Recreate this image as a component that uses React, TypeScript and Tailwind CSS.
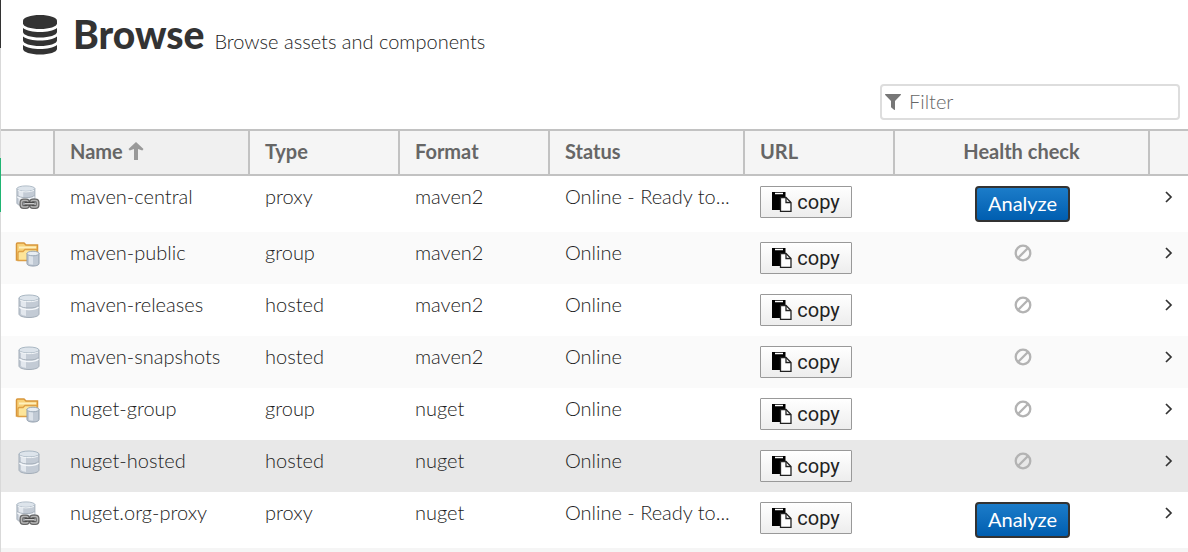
import React from 'react';

type RepoType = 'proxy' | 'group' | 'hosted';

interface Repository {
  name: string;
  type: RepoType;
  format: string;
  status: string;
}

const REPOSITORIES: Repository[] = [
  { name: 'maven-central', type: 'proxy', format: 'maven2', status: 'Online - Ready to...' },
  { name: 'maven-public', type: 'group', format: 'maven2', status: 'Online' },
  { name: 'maven-releases', type: 'hosted', format: 'maven2', status: 'Online' },
  { name: 'maven-snapshots', type: 'hosted', format: 'maven2', status: 'Online' },
  { name: 'nuget-group', type: 'group', format: 'nuget', status: 'Online' },
  { name: 'nuget-hosted', type: 'hosted', format: 'nuget', status: 'Online' },
  { name: 'nuget.org-proxy', type: 'proxy', format: 'nuget', status: 'Online - Ready to...' }
];

const SELECTED = 'nuget-hosted';

const DatabaseIcon = () => (
  <svg viewBox="0 0 34 40" className="h-10 w-[34px] shrink-0" fill="#333" aria-hidden="true">
    <path d="M0 5.5C0 2.5 7.6 0 17 0s17 2.5 17 5.5v3C34 11.500 26.400 14 17 14S0 11.500 0 8.500z" />
    <path d="M0 13c3.500 2.600 10 4 17 4s13.500-1.400 17-4v4c0 3-7.600 5.500-17 5.500S0 20 0 17z" />
    <path d="M0 21.500c3.500 2.600 10 4 17 4s13.500-1.400 17-4v4c0 3-7.600 5.500-17 5.500S0 28.500 0 25.500z" />
    <path d="M0 30c3.500 2.600 10 4 17 4s13.500-1.400 17-4v4c0 3-7.600 5.500-17 5.500S0 37 0 34z" />
  </svg>
);

const FilterIcon = () => (
  <svg viewBox="0 0 16 16" className="h-4 w-4 shrink-0" fill="#777" aria-hidden="true">
    <path d="M.6 0h14.800c.6 0 .8.700.4 1.100L10 7v8.400c0 .5-.6.700-1 .4l-2.700-2.300c-.2-.2-.3-.4-.3-.6V7L.2 1.100C-.2.700 0 0 .6 0z" />
  </svg>
);

const SortIcon = () => (
  <svg viewBox="0 0 16 18" className="h-[18px] w-4" fill="#999" aria-hidden="true">
    <path d="M8 0l7.500 7-1.200 1.500-4.300-1.500V18H6V7L1.700 8.500.5 7z" />
  </svg>
);

const Cylinder = () => (
  <>
    <path d="M1 4v16c0 2 4.500 3.500 10 3.500S21 22 21 20V4z" fill="#c3cbd5" stroke="#a3adb8" />
    <path d="M3 6v14c1 1 3 1.600 5 1.900V7.500z" fill="#e3e8ee" />
    <path d="M1.500 11.500c2 2 5 2.500 9.500 2.500s7.500-.5 9.500-2.500" fill="none" stroke="#a3adb8" />
    <path d="M1.500 13c2 2 5 2.500 9.500 2.500s7.500-.5 9.500-2.500" fill="none" stroke="#f4f7fa" strokeWidth="1.500" />
    <ellipse cx="11" cy="4" rx="10" ry="3" fill="#dde4eb" stroke="#a9b7c3" />
    <path d="M2 6c4 2.200 14 2.200 18 0" fill="none" stroke="#f5f8fa" />
  </>
);

const TypeIcon: React.FC<{ type: RepoType }> = ({ type }) => (
  <svg viewBox="0 0 26 26" className="h-[26px] w-[26px]" role="img" aria-label={type}>
    {type === 'hosted' && <g transform="translate(4 1)"><Cylinder /></g>}
    {type === 'proxy' && (
      <>
        <g transform="translate(2 0) scale(.9)"><Cylinder /></g>
        <g fill="none">
          <rect x="7.500" y="15.500" width="6.500" height="6.500" rx="2" stroke="#666" strokeWidth="4" />
          <rect x="17" y="15.500" width="6.500" height="6.500" rx="2" stroke="#666" strokeWidth="4" />
          <rect x="7.500" y="15.500" width="6.500" height="6.500" rx="2" stroke="#b5b5b5" strokeWidth="1.500" />
          <rect x="17" y="15.500" width="6.500" height="6.500" rx="2" stroke="#b5b5b5" strokeWidth="1.500" />
          <path d="M10.500 18.700h10" stroke="#444" strokeWidth="4" />
          <path d="M10.500 18.700h10" stroke="#ccc" strokeWidth="1.500" />
        </g>
      </>
    )}
    {type === 'group' && (
      <>
        <path d="M2.500 19V3c0-.7.3-1 1-1H10l2 2h11.500v15H3z" fill="#f8d27a" stroke="#d8963b" strokeWidth="1.500" />
        <path d="M5 6.500h17" stroke="#fff0bd" strokeWidth="2" />
        <path d="M4 19.500V12c0-1 .5-1.500 1.500-1.500H9l2-2h12v11z" fill="#fde59a" stroke="#dfa044" strokeWidth="1.300" />
        <path d="M13 12v10.500c0 1.600 2.700 2.500 6 2.500s6-.9 6-2.500V12z" fill="#c0c9d4" stroke="#8f9cab" />
        <path d="M15 14v8.500c1 .8 2.500 1 4 1V14z" fill="#dde3ea" />
        <ellipse cx="19" cy="12.500" rx="6" ry="2.300" fill="#e8edf2" stroke="#9aa8b6" />
      </>
    )}
  </svg>
);

const CopyIcon = () => (
  <svg viewBox="0 0 20 20" className="h-5 w-5" aria-hidden="true">
    <path d="M0 0h13.500v5H8v13H0z" fill="#000" />
    <path d="M3 1.500h8" stroke="#fff" strokeWidth="1.500" />
    <path d="M8.500 5.500H14l5 5v9H8.500z" fill="#fff" stroke="#222" strokeWidth="1.300" />
    <path d="M14 5.500v5h5" fill="none" stroke="#222" strokeWidth="1.300" />
  </svg>
);

const BanIcon = () => (
  <svg viewBox="0 0 18 18" className="h-[18px] w-[18px]" fill="none" stroke="#b3b3b3" strokeWidth="2.300" role="img" aria-label="Not available">
    <circle cx="9" cy="9" r="7.300" />
    <path d="M4 14L14 4" />
  </svg>
);

const ChevronIcon = () => (
  <svg viewBox="0 0 8 12" className="h-3 w-2" fill="none" stroke="#333" strokeWidth="1.700" aria-hidden="true">
    <path d="M1 1l5 5-5 5" />
  </svg>
);

const HEAD = 'border-r-2 border-[#c2c2c2] px-[15px] pb-1 text-left font-bold';
const CELL = 'truncate px-[15px] py-[10px] align-top';

const RepositoryRow: React.FC<{ repo: Repository }> = ({ repo }) => (
  <tr className={repo.name === SELECTED ? 'bg-[#e8e8e8]' : 'odd:bg-white even:bg-[#fafafa]'}>
    <td className="pt-[9px] pl-[13px] align-top"><TypeIcon type={repo.type} /></td>
    <td className={CELL}>{repo.name}</td>
    <td className={CELL}>{repo.type}</td>
    <td className={CELL}>{repo.format}</td>
    <td className={CELL}>{repo.status}</td>
    <td className="px-[15px] py-[10px] align-top">
      <button className="flex h-8 w-[92px] items-center justify-center gap-[5px] rounded-[1px] border border-[#999] bg-linear-to-b from-white to-[#ededed] font-['Roboto',sans-serif] font-normal text-[#222]">
        <CopyIcon />
        copy
      </button>
    </td>
    <td className="py-[10px] align-top">
      {repo.type === 'proxy' ? (
        <button className="mx-auto block h-9 w-[95px] rounded-[4px] border-2 border-[#333] bg-linear-to-b from-[#1b7cc9] to-[#005eb0] pb-[2px] font-normal text-white">
          Analyze
        </button>
      ) : (
        <div className="flex h-[22px] items-center justify-center"><BanIcon /></div>
      )}
    </td>
    <td className="py-[10px] align-top">
      <div className="flex h-[22px] items-center justify-center"><ChevronIcon /></div>
    </td>
  </tr>
);

export default function App() {
  return (
    <div className="flex bg-white font-['Lato',sans-serif] text-[20px] leading-[20px] font-light text-[#222]">
      <div className="flex w-px shrink-0 flex-col bg-[#d9d9d9]">
        <div className="h-12 bg-[#333]" />
        <div className="mt-[110px] h-[54px] bg-[#1fb573]" />
      </div>

      <main className="min-w-0 flex-1">
        <header className="flex h-[70px] items-center gap-4 pl-[22px]">
          <DatabaseIcon />
          <div className="flex items-baseline gap-[10px] pb-[2px]">
            <h1 className="text-[39px] leading-[48px] font-black text-[#333]">Browse</h1>
            <p>Browse assets and components</p>
          </div>
        </header>

        <div className="flex justify-end pt-[14px] pr-2 pb-[9px]">
          <label className="flex h-9 w-[300px] items-center gap-2 rounded-[4px] border-2 border-[#ddd] px-[3px]">
            <FilterIcon />
            <input
              type="text"
              aria-label="Filter"
              placeholder="Filter"
              className="w-full min-w-0 pb-[2px] outline-none placeholder:text-[#666]"
            />
          </label>
        </div>

        <table className="w-full table-fixed border-separate border-spacing-0">
          <colgroup>
            <col className="w-[54px]" />
            <col className="w-[195px]" />
            <col className="w-[150px]" />
            <col className="w-[150px]" />
            <col className="w-[195px]" />
            <col className="w-[150px]" />
            <col />
            <col className="w-[38px]" />
          </colgroup>
          <thead className="text-[#666]">
            <tr className="h-[47px] bg-[#f5f5f5] [&>th]:border-y-2">
              <th className={HEAD} aria-label="Icon" />
              <th className={`${HEAD} bg-[#f0f0f0]`}>
                <span className="flex items-center gap-[5px]">Name <SortIcon /></span>
              </th>
              <th className={HEAD}>Type</th>
              <th className={HEAD}>Format</th>
              <th className={HEAD}>Status</th>
              <th className={HEAD}>URL</th>
              <th className="border-r-2 border-[#c2c2c2] pb-1 text-center font-bold">Health check</th>
              <th className="border-[#c2c2c2]" aria-label="Open" />
            </tr>
          </thead>
          <tbody>
            {REPOSITORIES.map(repo => (
              <RepositoryRow key={repo.name} repo={repo} />
            ))}
          </tbody>
        </table>
        <div className="h-1 bg-[#f5f5f5]" />
      </main>
    </div>
  );
}
